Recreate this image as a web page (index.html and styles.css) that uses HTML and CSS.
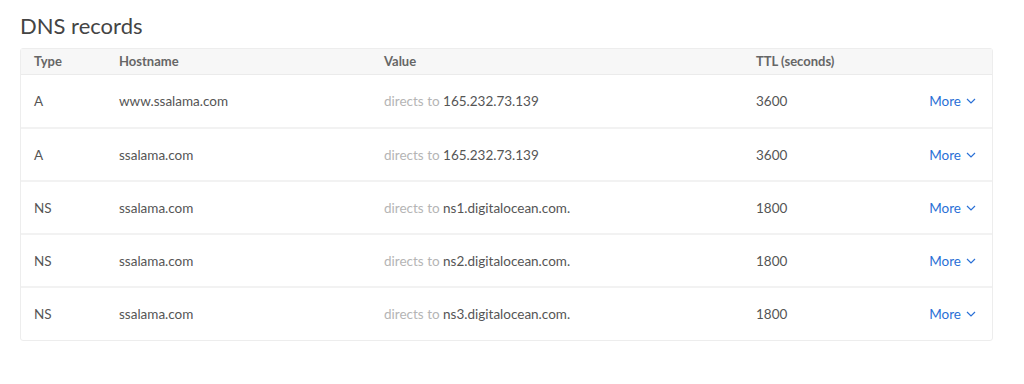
FILE: index.html
```html
<!DOCTYPE html>
<html lang="en">
<head>
    <meta charset="UTF-8">
    <title>DNS records</title>
    <link rel="stylesheet" href="styles.css">
</head>
<body>
    <h2 class="title">DNS records</h2>
    <div class="records">
        <div class="row head">
            <span class="c-type">Type</span>
            <span class="c-host">Hostname</span>
            <span class="c-value">Value</span>
            <span class="c-ttl">TTL (seconds)</span>
            <span class="c-more"></span>
        </div>
        <div class="row">
            <span class="c-type">A</span>
            <span class="c-host">www.ssalama.com</span>
            <span class="c-value"><em>directs to</em> 165.232.73.139</span>
            <span class="c-ttl">3600</span>
            <a class="c-more" href="#">More <svg width="10" height="6" viewBox="0 0 10 6"><path d="M1 1l4 4 4-4" fill="none" stroke="currentColor" stroke-width="1.2"/></svg></a>
        </div>
        <div class="row">
            <span class="c-type">A</span>
            <span class="c-host">ssalama.com</span>
            <span class="c-value"><em>directs to</em> 165.232.73.139</span>
            <span class="c-ttl">3600</span>
            <a class="c-more" href="#">More <svg width="10" height="6" viewBox="0 0 10 6"><path d="M1 1l4 4 4-4" fill="none" stroke="currentColor" stroke-width="1.2"/></svg></a>
        </div>
        <div class="row">
            <span class="c-type">NS</span>
            <span class="c-host">ssalama.com</span>
            <span class="c-value"><em>directs to</em> ns1.digitalocean.com.</span>
            <span class="c-ttl">1800</span>
            <a class="c-more" href="#">More <svg width="10" height="6" viewBox="0 0 10 6"><path d="M1 1l4 4 4-4" fill="none" stroke="currentColor" stroke-width="1.2"/></svg></a>
        </div>
        <div class="row">
            <span class="c-type">NS</span>
            <span class="c-host">ssalama.com</span>
            <span class="c-value"><em>directs to</em> ns2.digitalocean.com.</span>
            <span class="c-ttl">1800</span>
            <a class="c-more" href="#">More <svg width="10" height="6" viewBox="0 0 10 6"><path d="M1 1l4 4 4-4" fill="none" stroke="currentColor" stroke-width="1.2"/></svg></a>
        </div>
        <div class="row">
            <span class="c-type">NS</span>
            <span class="c-host">ssalama.com</span>
            <span class="c-value"><em>directs to</em> ns3.digitalocean.com.</span>
            <span class="c-ttl">1800</span>
            <a class="c-more" href="#">More <svg width="10" height="6" viewBox="0 0 10 6"><path d="M1 1l4 4 4-4" fill="none" stroke="currentColor" stroke-width="1.2"/></svg></a>
        </div>
    </div>
</body>
</html>
```
FILE: styles.css
```css
body {
    font-family: Lato, "Open Sans", Arial, sans-serif;
    background: #fff;
    margin: 0;
    padding: 11px 31px 0 20px;
    color: #555;
}

.title {
    font-size: 22px;
    font-weight: 400;
    color: #444;
    margin: 0 0 7px;
    line-height: 30px;
}

.records {
    border: 1px solid #ededed;
    border-radius: 3px;
}

.row {
    display: grid;
    grid-template-columns: 85px 265px 372px 1fr 100px;
    align-items: center;
    height: 51px;
    padding-left: 13px;
    padding-right: 16px;
    border-top: 2px solid #f2f2f2;
    font-size: 13.5px;
}

.row.head {
    height: 24px;
    padding-bottom: 1px;
    border-top: 0;
    border-bottom: 1px solid #ebebeb;
    background: #f7f7f7;
    color: #666;
    font-weight: 700;
    font-size: 13px;
}

.row.head + .row {
    border-top: 0;
    height: 52px;
}

.row:last-child {
    height: 52px;
}

.c-value em {
    font-style: normal;
    color: #b5b5b5;
}

.c-more {
    color: #2a70d6;
    text-decoration: none;
    display: flex;
    align-items: center;
    justify-content: flex-end;
    gap: 5px;
}
```
